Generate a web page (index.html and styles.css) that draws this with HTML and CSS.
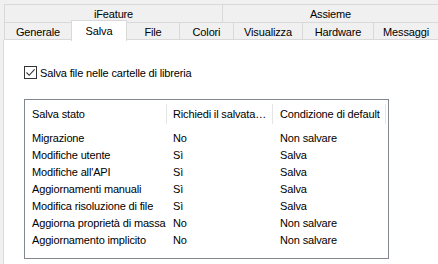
FILE: index.html
```html
<!DOCTYPE html>
<html lang="it">
<head>
    <meta charset="UTF-8">
    <title>Opzioni</title>
    <link rel="stylesheet" href="styles.css">
</head>
<body>
    <div class="window">
        <div class="groups">
            <div class="group group-first">iFeature</div>
            <div class="group group-last">Assieme</div>
        </div>
        <div class="tabs">
            <div class="tab tab-generale">Generale</div>
            <div class="tab tab-salva active">Salva</div>
            <div class="tab tab-file">File</div>
            <div class="tab tab-colori">Colori</div>
            <div class="tab tab-visualizza">Visualizza</div>
            <div class="tab tab-hardware">Hardware</div>
            <div class="tab tab-messaggi">Messaggi</div>
        </div>
        <div class="panel">
            <label class="check">
                <span class="box">
                    <svg width="11" height="11" viewBox="0 0 11 11">
                        <path d="M1.5 5.5 L4.2 8.3 L9.6 2.3" fill="none" stroke="#333" stroke-width="1.1"/>
                    </svg>
                </span>
                Salva file nelle cartelle di libreria
            </label>

            <div class="list">
                <div class="list-head">
                    <div class="col col1">Salva stato</div>
                    <div class="col col2">Richiedi il salvata…</div>
                    <div class="col col3">Condizione di default</div>
                </div>
                <div class="row"><div class="col col1">Migrazione</div><div class="col col2">No</div><div class="col col3">Non salvare</div></div>
                <div class="row"><div class="col col1">Modifiche utente</div><div class="col col2">Sì</div><div class="col col3">Salva</div></div>
                <div class="row"><div class="col col1">Modifiche all'API</div><div class="col col2">Sì</div><div class="col col3">Salva</div></div>
                <div class="row"><div class="col col1">Aggiornamenti manuali</div><div class="col col2">Sì</div><div class="col col3">Salva</div></div>
                <div class="row"><div class="col col1">Modifica risoluzione di file</div><div class="col col2">Sì</div><div class="col col3">Salva</div></div>
                <div class="row"><div class="col col1">Aggiorna proprietà di massa</div><div class="col col2">No</div><div class="col col3">Non salvare</div></div>
                <div class="row"><div class="col col1">Aggiornamento implicito</div><div class="col col2">No</div><div class="col col3">Non salvare</div></div>
            </div>
        </div>
    </div>
</body>
</html>
```

FILE: styles.css
```css
body {
    margin: 0;
    font-family: 'Liberation Sans', Arial, sans-serif;
    font-size: 11px;
    letter-spacing: -0.15px;
    color: #000;
    background-color: #f0f0f0;
}

.window {
    width: 438px;
    height: 264px;
    padding: 4px 0 0 3px;
    box-sizing: border-box;
    display: flex;
    flex-direction: column;
    overflow: hidden;
}

.groups, .tabs {
    display: flex;
    margin-left: 1px;
    height: 18px;
}

.group, .tab {
    box-sizing: border-box;
    border: 1px solid #d9d9d9;
    border-right: none;
    background-color: #f0f0f0;
    display: flex;
    align-items: center;
    justify-content: center;
    line-height: 1;
}

.group {
    border-bottom: none;
    padding-top: 1px;
}

.group-first { width: 218px; }
.group-last { flex: 1; }

.tab { height: 18px; padding-top: 2px; }
.tab-generale { width: 67px; }
.tab-salva { width: 56px; }
.tab-file { width: 52px; }
.tab-colori { width: 54px; }
.tab-visualizza { width: 69px; }
.tab-hardware { width: 71px; }
.tab-messaggi { flex: 1; }

.tab.active {
    background-color: #fff;
    height: 21px;
    margin-top: -2px;
    padding-top: 0;
    border-bottom: none;
    border-right: 1px solid #d9d9d9;
    position: relative;
    z-index: 1;
}

.tab.active + .tab {
    border-left: none;
}

.panel {
    flex: 1;
    background-color: #fff;
    border-left: 1px solid #d9d9d9;
    padding: 26px 0 0 20px;
}

.check {
    display: flex;
    align-items: center;
    gap: 3px;
}

.box {
    width: 13px;
    height: 13px;
    box-sizing: border-box;
    border: 1px solid #333;
    display: flex;
    align-items: center;
    justify-content: center;
}

.list {
    margin-top: 20px;
    width: 365px;
    height: 160px;
    box-sizing: border-box;
    border: 1px solid #828790;
    padding-top: 4px;
}

.list-head, .row {
    display: grid;
    grid-template-columns: 142px 106px 113px;
}

.list-head {
    height: 20px;
    margin-bottom: 5px;
}

.list-head .col {
    display: flex;
    align-items: center;
    border-right: 1px solid #e5e5e5;
}

.row {
    height: 17px;
    align-items: center;
}

.col {
    white-space: nowrap;
}

.col1 { padding-left: 7px; }
.col2 { padding-left: 6px; }
.col3 { padding-left: 7px; }
```
